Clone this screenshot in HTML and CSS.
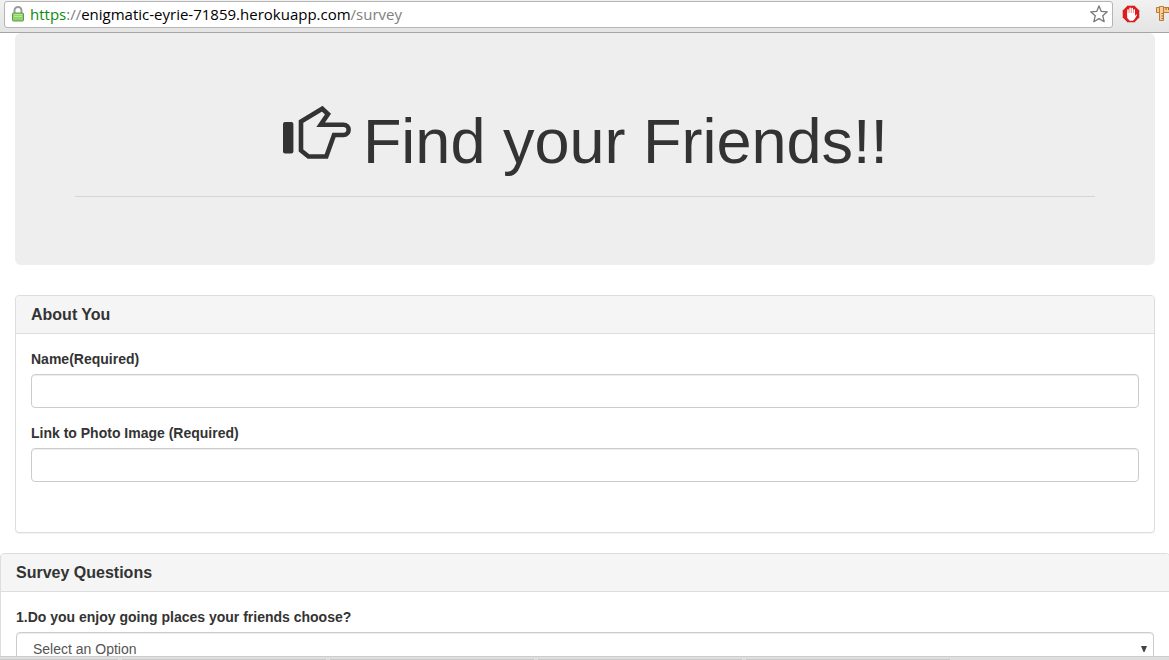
FILE: index.html
```html
<!DOCTYPE html>
<html lang="en">
<head>
<meta charset="utf-8">
<title>Find your Friends</title>
<link rel="stylesheet" href="styles.css">
</head>
<body>
<div class="browser">
  <header class="toolbar">
    <div class="address-bar">
      <svg class="lock" width="12" height="16" viewBox="0 0 12 16" aria-hidden="true">
        <path d="M2.500 8V4.500a3.500 3.500 0 0 1 7 0V8" fill="none" stroke="#9b9b9b" stroke-width="2"/>
        <rect x=".5" y="7" width="11" height="8" rx="1" fill="#8fd46c" stroke="#5d9a41"/>
        <path d="M2 8.500h8M2 10.500h8" stroke="#b4e79a"/>
      </svg>
      <div class="url"><span class="scheme">https</span><span class="muted">://</span>enigmatic-eyrie-71859.herokuapp.com<span class="muted">/survey</span></div>
      <button class="icon-button" type="button" aria-label="Bookmark this page">
        <svg width="18" height="18" viewBox="0 0 18 18"><path d="M9 .9l2.300 5.500 6 .4-4.600 3.900 1.500 6L9 13.600l-5.200 3.100 1.500-6L.7 6.800l6-.4z" fill="#fff" stroke="#777" stroke-width="1.300" stroke-linejoin="round"/></svg>
      </button>
    </div>
    <div class="extensions">
      <button class="icon-button" type="button" aria-label="Ad blocker">
        <svg width="18" height="18" viewBox="0 0 18 18">
          <path d="M5.500.5h7l5 5v7l-5 5h-7l-5-5v-7z" fill="#e01b1b" stroke="#c9c9c9" stroke-width=".8"/>
          <path d="M6 10V5M8.100 9V3.300M10.200 9V3.600M12.200 10V5" stroke="#fff" stroke-width="1.600" stroke-linecap="round"/>
          <path d="M5.200 8h7.800v3.200l1.100-1.900.9.700-2.300 4.100-1.700 1.600H7.700l-2.500-2.700z" fill="#fff"/>
        </svg>
      </button>
      <button class="icon-button" type="button" aria-label="Page ruler">
        <svg width="18" height="18" viewBox="0 0 18 18">
          <path d="M.5 2.500h17v5H.5z" fill="#f3c78d" stroke="#bd7b38"/>
          <path d="M3.500 1.500h4v14h-4z" fill="#f6cf99" stroke="#bd7b38"/>
          <path d="M5.500 8.500h2M5.500 11h2M5.500 13.500h2M10 3v2M12.500 3v2M15 3v2" stroke="#a8662a"/>
        </svg>
      </button>
    </div>
  </header>

  <main class="page">
    <section class="container">
      <div class="jumbotron">
        <h1 class="title">
          <svg class="hand" width="70" height="56" viewBox="0 0 70 56" aria-hidden="true">
            <rect x="1" y="17" width="10.400" height="31.500" rx="2" fill="#333"/>
            <path d="M40.200 3.700L19 16.500v29l7.500 6h17.800L52 30h9.500a5.100 5.100 0 0 0 0-10.300H38.700L46 9z" fill="none" stroke="#333" stroke-width="4.600"/>
          </svg>
          <span>Find your Friends!!</span>
        </h1>
        <hr class="rule">
      </div>
      <section class="panel">
        <h2 class="panel-heading">About You</h2>
        <form class="panel-body about">
          <div class="field">
            <label for="name">Name(Required)</label>
            <input class="control" id="name" type="text">
          </div>
          <div class="field">
            <label for="photo">Link to Photo Image (Required)</label>
            <input class="control" id="photo" type="text">
          </div>
        </form>
      </section>
    </section>

    <section class="panel survey">
      <h2 class="panel-heading">Survey Questions</h2>
      <form class="panel-body">
        <div class="field">
          <label for="q1">1.Do you enjoy going places your friends choose?</label>
          <div class="select-wrap">
            <select class="control" id="q1"><option>Select an Option</option></select>
            <svg class="arrow" width="6" height="6" viewBox="0 0 6 6" aria-hidden="true"><path d="M0 0h6L3.500 6h-1z" fill="#444"/></svg>
          </div>
        </div>
      </form>
    </section>
  </main>

  <footer class="taskbar"><i></i><i></i><i></i><i></i><i></i></footer>
</div>
</body>
</html>
```
FILE: styles.css
```css
* { box-sizing: border-box; }

body {
  margin: 0;
  background: #fff;
  color: #333;
  font: 14px/20px "Liberation Sans", Arial, sans-serif;
}

.browser {
  display: flex;
  flex-direction: column;
  height: 100vh;
  overflow: hidden;
}

.toolbar {
  flex: none;
  display: flex;
  align-items: center;
  gap: 9px;
  height: 33px;
  padding: 0 0 4px 4px;
  margin-right: -5px;
  background: linear-gradient(#f1f1f1, #e4e4e4);
  border-bottom: 1px solid #a5a5a5;
}

.address-bar {
  flex: 1;
  display: flex;
  align-items: center;
  height: 27px;
  padding: 0 4px 0 7px;
  background: #fff;
  border: 1px solid #b5b5b5;
  border-radius: 3px;
}

.extensions {
  display: flex;
  gap: 16px;
}

.lock { flex: none; }

.url {
  flex: 1;
  padding-left: 6px;
  color: #000;
  font: 15px/20px "Open Sans", "Noto Sans", sans-serif;
}

.scheme { color: #0b8a0b; }
.muted { color: #808080; }

.icon-button {
  flex: none;
  display: block;
  padding: 0;
  border: 0;
  background: none;
}

.icon-button svg { display: block; }

.page {
  flex: 1;
  min-height: 0;
  overflow: hidden;
}

.container { padding: 0 14px 0 15px; }

.jumbotron {
  padding: 68px 60px 48px;
  margin-bottom: 30px;
  background: #eee;
  border-radius: 6px;
}

.title {
  display: flex;
  justify-content: center;
  gap: 11px;
  margin: 0 0 20px;
  font-size: 63px;
  font-weight: 400;
  line-height: 75px;
}

.title span { line-height: 80px; height: 75px; }

.hand { margin-top: 4px; }

.rule {
  height: 1px;
  margin: 0 0 20px;
  border: 0;
  background: #d5d5d5;
}

.panel {
  margin-bottom: 20px;
  background: #fff;
  border: 1px solid #ddd;
  border-radius: 4px;
  box-shadow: 0 1px 1px rgba(0, 0, 0, .05);
}

.survey { margin-right: -1px; }

.panel-heading {
  margin: 0;
  padding: 10px 15px;
  background: #f5f5f5;
  border-bottom: 1px solid #ddd;
  border-radius: 3px 3px 0 0;
  font-size: 16px;
  line-height: 17px;
}

.panel-body { padding: 15px; }

.about { padding-bottom: 35px; }

.field { margin-bottom: 15px; }

label {
  display: block;
  margin-bottom: 5px;
  font-weight: 700;
}

.control {
  display: block;
  width: 100%;
  height: 34px;
  padding: 6px 12px;
  color: #555;
  background: #fff;
  border: 1px solid #ccc;
  border-radius: 4px;
  box-shadow: inset 0 1px 1px rgba(0, 0, 0, .075);
  font: inherit;
}

select.control {
  appearance: none;
  padding: 6px 16px;
}

.select-wrap { position: relative; }

.arrow {
  position: absolute;
  top: 14px;
  right: 7px;
  pointer-events: none;
}

.taskbar {
  flex: none;
  display: grid;
  grid-template-columns: 118px repeat(4, 204px);
  gap: 4px;
  height: 4px;
  padding-top: 2px;
  border-top: 1px solid #ccc;
  background: #dfdfdf;
}

.taskbar i { background: #c8c8c8; }
```
